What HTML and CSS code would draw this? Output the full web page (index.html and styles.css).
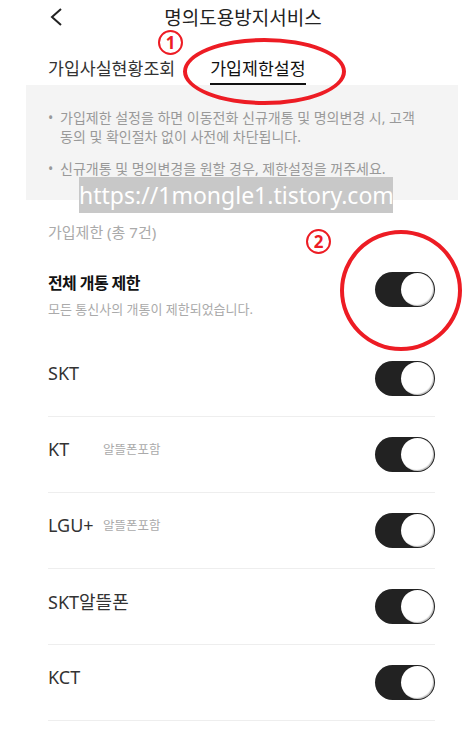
FILE: index.html
```html
<!DOCTYPE html>
<html lang="ko">
<head>
    <meta charset="UTF-8">
    <meta name="viewport" content="width=device-width, initial-scale=1.0">
    <title>명의도용방지서비스</title>
    <link rel="stylesheet" href="styles.css">
</head>
<body>

<div class="header">
    <svg class="back" width="14" height="18" viewBox="0 0 14 18">
        <path d="M12 1 L3 9 L12 17" fill="none" stroke="#222" stroke-width="2"/>
    </svg>
    <div class="title">명의도용방지서비스</div>
</div>

<div class="tabs">
    <div class="tab">가입사실현황조회</div>
    <div class="tab active">가입제한설정</div>
</div>

<div class="notice">
    <ul>
        <li>가입제한 설정을 하면 이동전화 신규개통 및 명의변경 시, 고객 동의 및 확인절차 없이 사전에 차단됩니다.</li>
        <li>신규개통 및 명의변경을 원할 경우, 제한설정을 꺼주세요.</li>
    </ul>
</div>

<div class="count">가입제한 (총 7건)</div>

<div class="list">
    <div class="row row-all">
        <div>
            <div class="all-title">전체 개통 제한</div>
            <div class="all-sub">모든 통신사의 개통이 제한되었습니다.</div>
        </div>
        <div class="toggle"><span class="knob"></span></div>
    </div>
    <div class="row">
        <div class="name"><span class="label">SKT</span></div>
        <div class="toggle"><span class="knob"></span></div>
    </div>
    <div class="row">
        <div class="name"><span class="label">KT</span><span class="tag">알뜰폰포함</span></div>
        <div class="toggle"><span class="knob"></span></div>
    </div>
    <div class="row">
        <div class="name"><span class="label">LGU+</span><span class="tag">알뜰폰포함</span></div>
        <div class="toggle"><span class="knob"></span></div>
    </div>
    <div class="row">
        <div class="name"><span class="label">SKT알뜰폰</span></div>
        <div class="toggle"><span class="knob"></span></div>
    </div>
    <div class="row">
        <div class="name"><span class="label">KCT</span></div>
        <div class="toggle"><span class="knob"></span></div>
    </div>
</div>

<!-- overlays: watermark and red markup -->
<div class="watermark">https://1mongle1.tistory.com</div>
<div class="mark mark-1">1</div>
<div class="ring ring-1"></div>
<div class="mark mark-2">2</div>
<div class="ring ring-2"></div>

</body>
</html>
```

FILE: styles.css
```css
body {
    margin: 0;
    font-family: "Noto Sans", "Noto Sans CJK KR", sans-serif;
    background-color: #fff;
    color: #222;
    position: relative;
    overflow: hidden;
}
.header {
    height: 34px;
    display: flex;
    align-items: center;
    padding: 0 37px 0 49px;
}
.back {
    display: block;
}
.title {
    flex: 1;
    text-align: center;
    padding-right: 12px;
    font-size: 19px;
    color: #222;
}
.tabs {
    display: flex;
    gap: 35px;
    margin-top: 23px;
    padding-left: 48px;
}
.tab {
    font-size: 17.3px;
    line-height: 23px;
    padding-bottom: 3px;
    border-bottom: 2px solid transparent;
    color: #333;
}
.tab.active {
    color: #111;
    border-bottom-color: #111;
}
.notice {
    margin: 0 14px 0 26px;
    background-color: #f4f4f4;
    padding: 23px 30px 22px 22px;
}
.notice ul {
    list-style: none;
    margin: 0;
    padding: 0;
}
.notice li {
    display: flex;
    font-size: 14px;
    line-height: 19px;
    color: #999;
}
.notice li + li {
    margin-top: 13px;
}
.notice li::before {
    content: "•";
    width: 12px;
    flex-shrink: 0;
    color: #999;
}
.count {
    margin-top: 22px;
    padding-left: 48px;
    font-size: 15px;
    line-height: 20px;
    color: #aaa;
}
.list {
    padding: 0 37px 0 48px;
}
.row {
    height: 75px;
    display: flex;
    align-items: center;
    justify-content: space-between;
    border-bottom: 1px solid #eee;
}
.row-all {
    height: 99px;
    box-sizing: border-box;
    align-items: flex-start;
    padding-top: 30px;
    border-bottom: none;
}
.all-title {
    font-size: 16px;
    line-height: 22px;
    font-weight: bold;
    letter-spacing: -0.6px;
    color: #111;
}
.all-sub {
    margin-top: 6px;
    font-size: 13px;
    line-height: 18px;
    color: #aaa;
}
.name {
    display: flex;
    align-items: center;
    margin-bottom: 12px;
}
.label {
    min-width: 55px;
    font-size: 18px;
    color: #333;
}
.tag {
    font-size: 12.5px;
    color: #aaa;
}
.toggle {
    width: 60px;
    height: 35px;
    box-sizing: border-box;
    padding: 1px;
    border-radius: 18px;
    background-color: #222;
    display: flex;
    justify-content: flex-end;
    flex-shrink: 0;
}
.knob {
    width: 33px;
    height: 33px;
    border-radius: 50%;
    background-color: #fff;
    box-shadow: inset -1px -1px 1px rgba(0, 0, 0, 0.25);
}
.watermark {
    position: absolute;
    left: 79px;
    top: 177px;
    width: 314px;
    height: 36px;
    background-color: #c8c8c8;
    color: #fff;
    font-size: 23px;
    line-height: 36px;
    text-align: center;
}
.mark {
    position: absolute;
    width: 21px;
    height: 21px;
    border: 2.5px solid #ed1c24;
    border-radius: 50%;
    color: #ed1c24;
    font-size: 17px;
    font-weight: bold;
    line-height: 21px;
    text-align: center;
}
.mark-1 {
    left: 158px;
    top: 30px;
}
.mark-2 {
    left: 306px;
    top: 229px;
}
.ring {
    position: absolute;
    box-sizing: border-box;
    border: 4.5px solid #ed1c24;
    border-radius: 50%;
}
.ring-1 {
    left: 183px;
    top: 38px;
    width: 163px;
    height: 67px;
}
.ring-2 {
    left: 340px;
    top: 230px;
    width: 122px;
    height: 121px;
}
```
